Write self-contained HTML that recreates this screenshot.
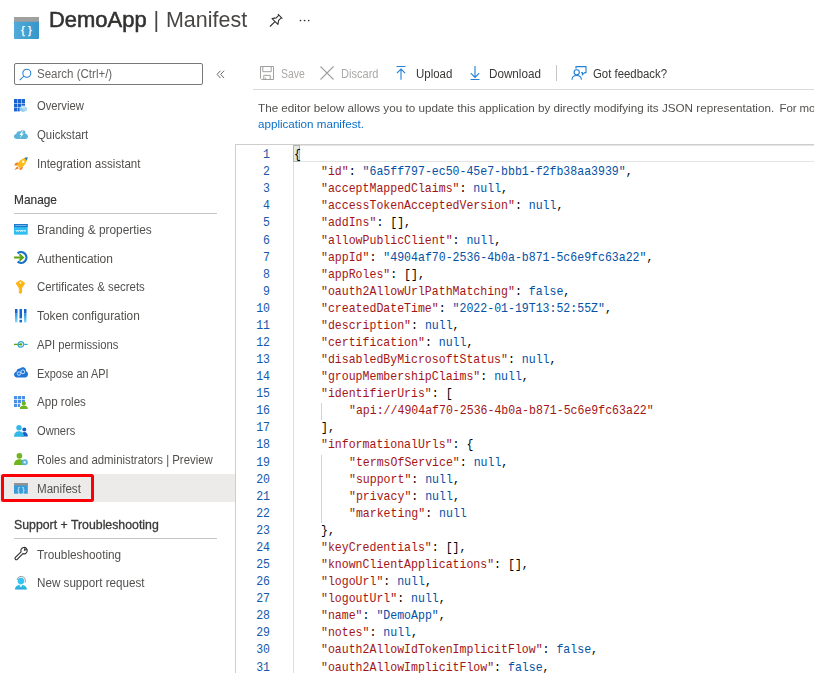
<!DOCTYPE html>
<html><head><meta charset="utf-8">
<style>
*{box-sizing:border-box;margin:0;padding:0}
html,body{width:814px;height:673px;overflow:hidden;background:#fff}
body{font-family:"Liberation Sans",sans-serif;color:#323130;position:relative}
.abs{position:absolute;white-space:nowrap}
.hr{height:1px;background:#c8c6c4}
.code{font-family:"Liberation Mono",monospace;font-size:11.9px;line-height:17.08px;white-space:pre}
.k{color:#a31515}.s{color:#0451a5}.p{color:#000}
.code{transform:scaleX(0.9704);transform-origin:0 0}
.ln{color:#1558ac;text-align:right;width:30px;transform-origin:100% 0}
svg{display:block;overflow:visible}
</style></head><body>
<svg class="abs" style="left:14px;top:17px" width="25" height="22" viewBox="0 0 25 22">
<defs><linearGradient id="tg" x1="0" y1="0" x2="1" y2="0"><stop offset="0" stop-color="#52abd9"/><stop offset="1" stop-color="#3496cb"/></linearGradient></defs>
<rect x="0" y="0" width="25" height="22" rx="1" fill="url(#tg)"/>
<rect x="0" y="0" width="25" height="4.7" rx="1" fill="#a0a0a0"/>
<text x="12.4" y="16.7" font-family="Liberation Sans" font-size="11.3" fill="#fff" stroke="#fff" stroke-width="0.25" text-anchor="middle">{ }</text>
</svg>
<svg class="abs" style="left:0px;top:0px" width="320" height="40" viewBox="0 0 320 40"><g transform="translate(275.3,21.2) rotate(45) scale(1.15)" fill="none" stroke="#323130" stroke-width="0.95" stroke-linejoin="round" stroke-linecap="round"><path d="M-2.4 -6 H2.4 M-1.5 -6 L-1.5 -2.6 L-3.6 0.4 H3.6 L1.5 -2.6 L1.5 -6 M0 0.4 V6.2"/></g>
<circle cx="300.5" cy="20.5" r="0.85" fill="#323130"/><circle cx="304.6" cy="20.5" r="0.85" fill="#323130"/><circle cx="308.7" cy="20.5" r="0.85" fill="#323130"/></svg>
<div class="abs" style="left:14px;top:63px;width:189px;height:22px;border:1px solid #7a7876;border-radius:2px"><svg class="abs" style="left:4px;top:4px" width="13" height="13" viewBox="0 0 13 13"><circle cx="7.8" cy="5.2" r="4" fill="none" stroke="#2580d4" stroke-width="1.05"/><path d="M5 8 L0.8 12.2" stroke="#2580d4" stroke-width="1.05"/></svg></div>
<svg class="abs" style="left:216px;top:69px" width="10" height="11" viewBox="0 0 10 11"><path d="M4.5 1.7 L1.1 5.4 L4.5 9.1 M8.1 1.7 L4.7 5.4 L8.1 9.1" fill="none" stroke="#605e5c" stroke-width="0.95"/></svg>
<div class="abs" style="left:0;top:474px;width:235px;height:28px;background:#edebe9"></div>
<div class="abs" style="left:1px;top:474px;width:92.8px;height:27.8px;border:3px solid #fb0007;border-radius:2.5px"></div>
<svg class="abs" style="left:14.0px;top:99.2px" width="12.6" height="13.0" viewBox="0 0 12.6 13.0"><g fill="#1a62cf"><rect x="0" y="0" width="3.4" height="4"/><rect x="3.8" y="0" width="3.4" height="4"/><rect x="7.6" y="0" width="3.4" height="4"/>
<rect x="0" y="4.5" width="3.4" height="4"/><rect x="3.8" y="4.5" width="3.4" height="4"/><rect x="7.6" y="4.5" width="3.4" height="2.2"/>
<rect x="0" y="9" width="3.4" height="3.4"/><rect x="3.8" y="9" width="2" height="3.4"/></g>
<path d="M5.6 8.3 L9.1 6.8 L12.6 8.3 L12.6 11.6 L9.1 13 L5.6 11.6 Z" fill="#8cc8ee"/><path d="M5.6 8.3 L9.1 9.7 L12.6 8.3 L9.1 6.8Z" fill="#c9e6f8"/><path d="M9.1 9.7 V13 L12.6 11.6 V8.3Z" fill="#a9d7f3"/></svg>
<svg class="abs" style="left:13.8px;top:130.0px" width="14.0" height="9.0" viewBox="0 0 14.0 9.0"><path d="M3 9 C1 9 0 7.8 0 6.5 C0 5.1 1 4.1 2.3 4 C2.4 1.8 4.4 0.6 6.2 1.4 C7 0.2 8.8 -0.3 10.2 0.6 C11.3 1.3 11.7 2.6 11.4 3.7 C12.9 3.9 14 5 14 6.5 C14 8 12.8 9 11.3 9 Z" fill="#59b4d9"/>
<path d="M9 0 L5.4 4.9 L7.3 4.9 L5.6 8.6 L9.8 3.6 L7.8 3.6 L9.6 0 Z" fill="#fff"/></svg>
<svg class="abs" style="left:14.0px;top:157.0px" width="13.8" height="13.0" viewBox="0 0 13.8 13.0"><path d="M13.6 0.2 C10 0.4 6.8 2.2 4.6 5.2 L3 8.6 L5.8 11 L9 9.4 C11.8 7 13.4 3.8 13.6 0.2Z" fill="#fbbc18"/>
<path d="M13.6 0.2 C12.4 0.3 11.3 0.6 10.3 1.1 L12.7 3.5 C13.2 2.5 13.5 1.4 13.6 0.2Z" fill="#2f7fb8"/>
<path d="M4.6 5.2 L1.5 6 L0.2 8.6 L3 8.6Z" fill="#f47a20"/><path d="M9 9.4 L8 12.4 L5.4 13 L5.8 11Z" fill="#f47a20"/>
<path d="M3 9.4 L0.4 13 L5 11.2Z" fill="#f47a20"/><circle cx="9.2" cy="4.8" r="1.2" fill="#fff"/></svg>
<svg class="abs" style="left:14.2px;top:223.5px" width="13.7" height="10.7" viewBox="0 0 13.7 10.7"><rect x="0" y="0" width="13.7" height="10.7" fill="#30bdf0"/><rect x="0" y="0" width="13.7" height="3.1" fill="#1b77c9"/><rect x="1.2" y="1.1" width="11.3" height="0.8" fill="#8cc6ee"/>
<path d="M1.8 6.1 L2.7 7.5 L3.6 6.1 L4.5 7.5 L5.4 6.1 M5.9 6.1 L6.8 7.5 L7.7 6.1 L8.6 7.5 L9.5 6.1 M10 6.1 L10.9 7.5 L11.8 6.1" fill="none" stroke="#fff" stroke-width="0.9"/></svg>
<svg class="abs" style="left:14.2px;top:251.2px" width="13.4" height="13.0" viewBox="0 0 13.4 13.0"><path d="M3.6 2.3 A5.4 5.4 0 1 1 3.6 10.7" fill="none" stroke="#1a73c8" stroke-width="2.3"/>
<path d="M0 6.5 H8.8 M5.4 3.3 L9 6.5 L5.4 9.7" fill="none" stroke="#5ea414" stroke-width="1.9"/></svg>
<svg class="abs" style="left:16.2px;top:279.8px" width="8.9" height="14.0" viewBox="0 0 8.9 14.0"><path d="M4.45 0 L8.3 2.2 C9 2.7 9 3.6 8.7 4.2 L6.1 8 L6.1 12.4 L4.45 14 L2.8 12.4 L2.8 11.2 L3.6 10.4 L2.8 9.6 L2.8 8 L0.2 4.2 C-0.1 3.6 -0.1 2.7 0.6 2.2 Z" fill="#fdb515"/>
<circle cx="4.45" cy="2.7" r="1" fill="#fff0c0"/></svg>
<svg class="abs" style="left:15.3px;top:308.6px" width="11.5" height="13.4" viewBox="0 0 11.5 13.4"><defs><linearGradient id="tk" x1="0" y1="0" x2="0" y2="1"><stop offset="0" stop-color="#2a93e4"/><stop offset="1" stop-color="#86e0f7"/></linearGradient></defs>
<rect x="0" y="0" width="2.5" height="4.6" fill="#1566cc"/><rect x="0" y="4.6" width="2.5" height="8.8" fill="url(#tk)"/>
<rect x="4.5" y="0" width="2.5" height="9.4" fill="#1566cc"/><rect x="4.5" y="10.8" width="2.5" height="2.6" fill="#1566cc"/>
<rect x="9" y="0" width="2.5" height="4.6" fill="#1566cc"/><rect x="9" y="4.6" width="2.5" height="8.8" fill="url(#tk)"/></svg>
<svg class="abs" style="left:14.2px;top:341.0px" width="13.7" height="6.8" viewBox="0 0 13.7 6.8"><path d="M0 3.4 H8" stroke="#5ea414" stroke-width="1.3"/><path d="M10.2 3.4 H13.7" stroke="#34a8d0" stroke-width="1.2"/>
<circle cx="6.9" cy="3.4" r="2.8" fill="none" stroke="#34a8d0" stroke-width="1.3"/><circle cx="6.9" cy="3.4" r="1.2" fill="#5ea414"/></svg>
<svg class="abs" style="left:14.2px;top:367.0px" width="14.0" height="10.4" viewBox="0 0 14.0 10.4"><path d="M3.2 10.4 C1.2 10.4 0 9 0 7.5 C0 6 1 4.9 2.4 4.7 C2.6 2.6 4.2 1.4 6 1.6 C7 0.3 9 -0.3 10.6 0.7 C11.8 1.5 12.2 2.8 12 4 C13.2 4.4 14 5.6 14 7.2 C14 9 12.8 10.4 11 10.4 Z" fill="#1f75d8"/>
<circle cx="5" cy="6.6" r="1.7" fill="none" stroke="#cfe4f8" stroke-width="1"/><circle cx="8.8" cy="4.8" r="1.9" fill="none" stroke="#cfe4f8" stroke-width="1"/></svg>
<svg class="abs" style="left:14.2px;top:395.7px" width="13.8" height="13.0" viewBox="0 0 13.8 13.0"><g fill="#4a8fe8"><rect x="0" y="0" width="3.2" height="3.2"/><rect x="3.9" y="0" width="3.2" height="3.2"/><rect x="7.8" y="0" width="3.2" height="3.2"/>
<rect x="0" y="3.9" width="3.2" height="3.2"/><rect x="3.9" y="3.9" width="3.2" height="3.2"/><rect x="7.8" y="3.9" width="3.2" height="2"/>
<rect x="0" y="7.8" width="3.2" height="3.2"/><rect x="3.9" y="7.8" width="2.2" height="3.2"/></g>
<circle cx="9.8" cy="7.4" r="2.1" fill="#6fb51f"/><path d="M5.8 13 C5.8 10.6 7.6 9.6 9.8 9.6 C12 9.6 13.8 10.6 13.8 13Z" fill="#6fb51f"/></svg>
<svg class="abs" style="left:14.2px;top:425.2px" width="13.8" height="11.8" viewBox="0 0 13.8 11.8"><circle cx="10.3" cy="4.4" r="2" fill="#1a5fc4"/><path d="M7.2 11.4 C7.2 8.6 8.4 7 10.4 7 C12.4 7 13.8 8.6 13.8 11.4Z" fill="#1a5fc4"/>
<circle cx="5" cy="2.8" r="2.7" fill="#32b8e8"/><path d="M0 11.8 C0 8.2 2.2 6.2 5 6.2 C7.8 6.2 10 8.2 10 11.8Z" fill="#32b8e8"/></svg>
<svg class="abs" style="left:14.2px;top:453.3px" width="13.8" height="12.3" viewBox="0 0 13.8 12.3"><circle cx="5.4" cy="2.9" r="2.8" fill="#6fb51f"/><path d="M0 12 C0 8.4 2.2 6.3 5.4 6.3 C8.6 6.3 10.8 8.4 10.8 12Z" fill="#6fb51f"/>
<circle cx="10.8" cy="9.3" r="3" fill="#59b4d9"/><circle cx="10.8" cy="9.3" r="1.2" fill="#d9eefa"/></svg>
<svg class="abs" style="left:14.2px;top:483.3px" width="13.8" height="10.7" viewBox="0 0 13.8 10.7"><rect x="0" y="0" width="13.8" height="10.7" fill="#3a9bd9"/><rect x="0" y="0" width="13.8" height="2.4" fill="#929292"/>
<text x="6.9" y="9.2" font-family="Liberation Sans" font-size="7.5" fill="#e6f2fa" text-anchor="middle">{ }</text></svg>
<svg class="abs" style="left:14.2px;top:547.4px" width="13.8" height="13.6" viewBox="0 0 13.8 13.6"><g transform="translate(1.9,11.8) rotate(-45)" fill="none" stroke="#323130" stroke-width="1.15" stroke-linejoin="round"><path d="M8.6 -1.3 L0.6 -1.3 A1.3 1.3 0 0 0 0.6 1.3 L8.6 1.3 A3.2 3.2 0 1 0 8.6 -1.3 Z"/><path d="M14.4 -1.3 L12 0 L14.4 1.3" stroke-width="1"/></g></svg>
<svg class="abs" style="left:15.3px;top:576.3px" width="11.8" height="13.6" viewBox="0 0 11.8 13.6"><defs><linearGradient id="sp" x1="0" y1="0" x2="0" y2="1"><stop offset="0" stop-color="#3ccbf4"/><stop offset="1" stop-color="#1fa4d6"/></linearGradient></defs>
<path d="M0 13.6 C0 10.3 2.3 8.7 5.9 8.7 C9.5 8.7 11.8 10.3 11.8 13.6Z" fill="url(#sp)"/><circle cx="5.9" cy="5" r="3.2" fill="#32c4f2"/>
<path d="M2.2 4 A4 4 0 0 1 10.2 5.2 V6.6" fill="none" stroke="#6a6a6a" stroke-width="0.7"/>
<path d="M4.6 9 L5.9 11.6 L7.2 9Z" fill="#fff"/></svg>
<div class="abs hr" style="left:14px;top:213px;width:203px"></div>
<div class="abs hr" style="left:14px;top:538px;width:203px"></div>
<div class="abs" style="left:235px;top:144px;width:1px;height:529px;background:#d0cecc"></div>
<div class="abs" style="left:235px;top:144px;width:579px;height:1px;background:#d0cecc"></div>
<svg class="abs" style="left:260px;top:66px" width="14" height="14" viewBox="0 0 14 14"><path d="M0.5 0.5 H13.5 V13.5 H1.7 L0.5 12.3 Z M2.8 0.5 V5.7 H11.2 V0.5 M3.8 13.5 V9.3 H10.2 V13.5 M5.6 13.5 V11.7" fill="none" stroke="#a19f9d" stroke-width="1"/></svg>
<svg class="abs" style="left:320px;top:66px" width="14" height="14" viewBox="0 0 14 14"><path d="M0.5 0.5 L13.5 13.5 M13.5 0.5 L0.5 13.5" fill="none" stroke="#a19f9d" stroke-width="1.1"/></svg>
<svg class="abs" style="left:396px;top:66px" width="10" height="15" viewBox="0 0 10 15"><path d="M0.5 0.5 H9.5 M5 13.7 V3.2 M0.9 7.1 L5 3 L9.1 7.1" fill="none" stroke="#2580d4" stroke-width="1.1"/></svg>
<svg class="abs" style="left:469.5px;top:66px" width="10" height="15" viewBox="0 0 10 15"><path d="M0.5 13.5 H9.5 M5 0 V11.2 M0.8 7.2 L5 11.4 L9.2 7.2" fill="none" stroke="#2580d4" stroke-width="1.1"/></svg>
<div class="abs" style="left:556px;top:65px;width:1px;height:16px;background:#c8c6c4"></div>
<svg class="abs" style="left:570.5px;top:66px" width="16" height="14" viewBox="0 0 16 14"><path d="M5 2.8 V0.6 H15 V6.6 H13.8 L11.4 8.8 V6.6 H10.2" fill="none" stroke="#2580d4" stroke-width="1.1"/><circle cx="5.7" cy="6.3" r="2.6" fill="none" stroke="#2580d4" stroke-width="1.1"/><path d="M1 13.8 C1 11 3.2 9.5 5.7 9.5 C8.2 9.5 10.4 11 10.4 13.8" fill="none" stroke="#2580d4" stroke-width="1.1"/></svg>
<div class="abs hr" style="left:253px;top:89px;width:561px;background:#dcdad8"></div>
<div class="abs" style="left:293px;top:145px;width:530px;height:17px;border:1px solid #e4e4e4"></div>
<div class="abs" style="left:293px;top:162px;width:1px;height:511px;background:#dedede"></div>
<div class="abs" style="left:293px;top:145px;width:7px;height:17px;border:1px solid #b4b4b4;background:#e4e9e4"></div>
<div class="abs" style="left:321px;top:403.3px;width:1px;height:17px;background:#d3d3d3"></div>
<div class="abs" style="left:321px;top:454.5px;width:1px;height:68.3px;background:#d3d3d3"></div>
<div class="abs code ln" style="left:240.4px;top:147.10px">1</div><div class="abs code" style="left:293.6px;top:147.10px"><span class="p">{</span></div>
<div class="abs code ln" style="left:240.4px;top:164.18px">2</div><div class="abs code" style="left:321.3px;top:164.18px"><span class="k">&quot;id&quot;</span><span class="p">: </span><span class="s">&quot;6a5ff797-ec50-45e7-bbb1-f2fb38aa3939&quot;</span><span class="p">,</span></div>
<div class="abs code ln" style="left:240.4px;top:181.26px">3</div><div class="abs code" style="left:321.3px;top:181.26px"><span class="k">&quot;acceptMappedClaims&quot;</span><span class="p">: </span><span class="s">null</span><span class="p">,</span></div>
<div class="abs code ln" style="left:240.4px;top:198.34px">4</div><div class="abs code" style="left:321.3px;top:198.34px"><span class="k">&quot;accessTokenAcceptedVersion&quot;</span><span class="p">: </span><span class="s">null</span><span class="p">,</span></div>
<div class="abs code ln" style="left:240.4px;top:215.42px">5</div><div class="abs code" style="left:321.3px;top:215.42px"><span class="k">&quot;addIns&quot;</span><span class="p">: [],</span></div>
<div class="abs code ln" style="left:240.4px;top:232.50px">6</div><div class="abs code" style="left:321.3px;top:232.50px"><span class="k">&quot;allowPublicClient&quot;</span><span class="p">: </span><span class="s">null</span><span class="p">,</span></div>
<div class="abs code ln" style="left:240.4px;top:249.58px">7</div><div class="abs code" style="left:321.3px;top:249.58px"><span class="k">&quot;appId&quot;</span><span class="p">: </span><span class="s">&quot;4904af70-2536-4b0a-b871-5c6e9fc63a22&quot;</span><span class="p">,</span></div>
<div class="abs code ln" style="left:240.4px;top:266.66px">8</div><div class="abs code" style="left:321.3px;top:266.66px"><span class="k">&quot;appRoles&quot;</span><span class="p">: [],</span></div>
<div class="abs code ln" style="left:240.4px;top:283.74px">9</div><div class="abs code" style="left:321.3px;top:283.74px"><span class="k">&quot;oauth2AllowUrlPathMatching&quot;</span><span class="p">: </span><span class="s">false</span><span class="p">,</span></div>
<div class="abs code ln" style="left:240.4px;top:300.82px">10</div><div class="abs code" style="left:321.3px;top:300.82px"><span class="k">&quot;createdDateTime&quot;</span><span class="p">: </span><span class="s">&quot;2022-01-19T13:52:55Z&quot;</span><span class="p">,</span></div>
<div class="abs code ln" style="left:240.4px;top:317.90px">11</div><div class="abs code" style="left:321.3px;top:317.90px"><span class="k">&quot;description&quot;</span><span class="p">: </span><span class="s">null</span><span class="p">,</span></div>
<div class="abs code ln" style="left:240.4px;top:334.98px">12</div><div class="abs code" style="left:321.3px;top:334.98px"><span class="k">&quot;certification&quot;</span><span class="p">: </span><span class="s">null</span><span class="p">,</span></div>
<div class="abs code ln" style="left:240.4px;top:352.06px">13</div><div class="abs code" style="left:321.3px;top:352.06px"><span class="k">&quot;disabledByMicrosoftStatus&quot;</span><span class="p">: </span><span class="s">null</span><span class="p">,</span></div>
<div class="abs code ln" style="left:240.4px;top:369.14px">14</div><div class="abs code" style="left:321.3px;top:369.14px"><span class="k">&quot;groupMembershipClaims&quot;</span><span class="p">: </span><span class="s">null</span><span class="p">,</span></div>
<div class="abs code ln" style="left:240.4px;top:386.22px">15</div><div class="abs code" style="left:321.3px;top:386.22px"><span class="k">&quot;identifierUris&quot;</span><span class="p">: [</span></div>
<div class="abs code ln" style="left:240.4px;top:403.30px">16</div><div class="abs code" style="left:349.0px;top:403.30px"><span class="k">&quot;api://4904af70-2536-4b0a-b871-5c6e9fc63a22&quot;</span></div>
<div class="abs code ln" style="left:240.4px;top:420.38px">17</div><div class="abs code" style="left:321.3px;top:420.38px"><span class="p">],</span></div>
<div class="abs code ln" style="left:240.4px;top:437.46px">18</div><div class="abs code" style="left:321.3px;top:437.46px"><span class="k">&quot;informationalUrls&quot;</span><span class="p">: {</span></div>
<div class="abs code ln" style="left:240.4px;top:454.54px">19</div><div class="abs code" style="left:349.0px;top:454.54px"><span class="k">&quot;termsOfService&quot;</span><span class="p">: </span><span class="s">null</span><span class="p">,</span></div>
<div class="abs code ln" style="left:240.4px;top:471.62px">20</div><div class="abs code" style="left:349.0px;top:471.62px"><span class="k">&quot;support&quot;</span><span class="p">: </span><span class="s">null</span><span class="p">,</span></div>
<div class="abs code ln" style="left:240.4px;top:488.70px">21</div><div class="abs code" style="left:349.0px;top:488.70px"><span class="k">&quot;privacy&quot;</span><span class="p">: </span><span class="s">null</span><span class="p">,</span></div>
<div class="abs code ln" style="left:240.4px;top:505.78px">22</div><div class="abs code" style="left:349.0px;top:505.78px"><span class="k">&quot;marketing&quot;</span><span class="p">: </span><span class="s">null</span></div>
<div class="abs code ln" style="left:240.4px;top:522.86px">23</div><div class="abs code" style="left:321.3px;top:522.86px"><span class="p">},</span></div>
<div class="abs code ln" style="left:240.4px;top:539.94px">24</div><div class="abs code" style="left:321.3px;top:539.94px"><span class="k">&quot;keyCredentials&quot;</span><span class="p">: [],</span></div>
<div class="abs code ln" style="left:240.4px;top:557.02px">25</div><div class="abs code" style="left:321.3px;top:557.02px"><span class="k">&quot;knownClientApplications&quot;</span><span class="p">: [],</span></div>
<div class="abs code ln" style="left:240.4px;top:574.10px">26</div><div class="abs code" style="left:321.3px;top:574.10px"><span class="k">&quot;logoUrl&quot;</span><span class="p">: </span><span class="s">null</span><span class="p">,</span></div>
<div class="abs code ln" style="left:240.4px;top:591.18px">27</div><div class="abs code" style="left:321.3px;top:591.18px"><span class="k">&quot;logoutUrl&quot;</span><span class="p">: </span><span class="s">null</span><span class="p">,</span></div>
<div class="abs code ln" style="left:240.4px;top:608.26px">28</div><div class="abs code" style="left:321.3px;top:608.26px"><span class="k">&quot;name&quot;</span><span class="p">: </span><span class="s">&quot;DemoApp&quot;</span><span class="p">,</span></div>
<div class="abs code ln" style="left:240.4px;top:625.34px">29</div><div class="abs code" style="left:321.3px;top:625.34px"><span class="k">&quot;notes&quot;</span><span class="p">: </span><span class="s">null</span><span class="p">,</span></div>
<div class="abs code ln" style="left:240.4px;top:642.42px">30</div><div class="abs code" style="left:321.3px;top:642.42px"><span class="k">&quot;oauth2AllowIdTokenImplicitFlow&quot;</span><span class="p">: </span><span class="s">false</span><span class="p">,</span></div>
<div class="abs code ln" style="left:240.4px;top:659.50px">31</div><div class="abs code" style="left:321.3px;top:659.50px"><span class="k">&quot;oauth2AllowImplicitFlow&quot;</span><span class="p">: </span><span class="s">false</span><span class="p">,</span></div>
<div class="abs" style="left:0;top:0;width:814px;height:673px;will-change:transform"><div class="abs" style="left:49.08px;top:11.52px;font-size:21.6px;line-height:16px;color:#323130;font-weight:400;transform:scaleX(1.0167);transform-origin:0 0;-webkit-text-stroke:0.55px #323130;">DemoApp</div>
<div class="abs" style="left:153.60px;top:11.52px;font-size:21.6px;line-height:16px;color:#484644;font-weight:400;">|</div>
<div class="abs" style="left:165.81px;top:11.52px;font-size:21.6px;line-height:16px;color:#484644;font-weight:400;transform:scaleX(0.9937);transform-origin:0 0;">Manifest</div>
<div class="abs" style="left:36.60px;top:65.74px;font-size:12px;line-height:16px;color:#666462;font-weight:400;transform:scaleX(0.9597);transform-origin:0 0;">Search (Ctrl+/)</div>
<div class="abs" style="left:36.90px;top:97.54px;font-size:12px;line-height:16px;color:#52504e;font-weight:400;transform:scaleX(0.9356);transform-origin:0 0;">Overview</div>
<div class="abs" style="left:36.90px;top:126.54px;font-size:12px;line-height:16px;color:#52504e;font-weight:400;transform:scaleX(0.9474);transform-origin:0 0;">Quickstart</div>
<div class="abs" style="left:36.64px;top:155.84px;font-size:12px;line-height:16px;color:#52504e;font-weight:400;transform:scaleX(0.9639);transform-origin:0 0;">Integration assistant</div>
<div class="abs" style="left:36.90px;top:222.24px;font-size:12px;line-height:16px;color:#52504e;font-weight:400;transform:scaleX(0.9882);transform-origin:0 0;">Branding &amp; properties</div>
<div class="abs" style="left:36.90px;top:250.94px;font-size:12px;line-height:16px;color:#52504e;font-weight:400;">Authentication</div>
<div class="abs" style="left:36.90px;top:279.24px;font-size:12px;line-height:16px;color:#52504e;font-weight:400;transform:scaleX(0.9509);transform-origin:0 0;">Certificates &amp; secrets</div>
<div class="abs" style="left:36.90px;top:307.94px;font-size:12px;line-height:16px;color:#52504e;font-weight:400;transform:scaleX(0.9875);transform-origin:0 0;">Token configuration</div>
<div class="abs" style="left:36.90px;top:336.64px;font-size:12px;line-height:16px;color:#52504e;font-weight:400;transform:scaleX(0.9378);transform-origin:0 0;">API permissions</div>
<div class="abs" style="left:36.90px;top:365.84px;font-size:12px;line-height:16px;color:#52504e;font-weight:400;transform:scaleX(0.9096);transform-origin:0 0;">Expose an API</div>
<div class="abs" style="left:36.90px;top:394.44px;font-size:12px;line-height:16px;color:#52504e;font-weight:400;transform:scaleX(0.9646);transform-origin:0 0;">App roles</div>
<div class="abs" style="left:36.90px;top:423.04px;font-size:12px;line-height:16px;color:#52504e;font-weight:400;transform:scaleX(0.9264);transform-origin:0 0;">Owners</div>
<div class="abs" style="left:36.90px;top:452.04px;font-size:12px;line-height:16px;color:#52504e;font-weight:400;transform:scaleX(0.9492);transform-origin:0 0;">Roles and administrators | Preview</div>
<div class="abs" style="left:36.90px;top:480.94px;font-size:12px;line-height:16px;color:#52504e;font-weight:400;transform:scaleX(0.9670);transform-origin:0 0;">Manifest</div>
<div class="abs" style="left:36.90px;top:546.74px;font-size:12px;line-height:16px;color:#52504e;font-weight:400;transform:scaleX(0.9831);transform-origin:0 0;">Troubleshooting</div>
<div class="abs" style="left:36.90px;top:574.74px;font-size:12px;line-height:16px;color:#52504e;font-weight:400;transform:scaleX(0.9714);transform-origin:0 0;">New support request</div>
<div class="abs" style="left:13.82px;top:192.37px;font-size:12.2px;line-height:16px;color:#323130;font-weight:400;transform:scaleX(0.9754);transform-origin:0 0;-webkit-text-stroke:0.15px #323130;">Manage</div>
<div class="abs" style="left:14.20px;top:516.97px;font-size:12.2px;line-height:16px;color:#3b3a39;font-weight:400;transform:scaleX(1.0102);transform-origin:0 0;-webkit-text-stroke:0.3px #3b3a39;">Support + Troubleshooting</div>
<div class="abs" style="left:280.90px;top:65.64px;font-size:12.3px;line-height:16px;color:#aaa8a6;font-weight:400;transform:scaleX(0.8478);transform-origin:0 0;">Save</div>
<div class="abs" style="left:341.10px;top:65.64px;font-size:12.3px;line-height:16px;color:#aaa8a6;font-weight:400;transform:scaleX(0.8986);transform-origin:0 0;">Discard</div>
<div class="abs" style="left:415.90px;top:65.64px;font-size:12.3px;line-height:16px;color:#3a3836;font-weight:400;transform:scaleX(0.9328);transform-origin:0 0;">Upload</div>
<div class="abs" style="left:488.85px;top:65.64px;font-size:12.3px;line-height:16px;color:#3a3836;font-weight:400;transform:scaleX(0.9490);transform-origin:0 0;">Download</div>
<div class="abs" style="left:592.90px;top:65.64px;font-size:12.3px;line-height:16px;color:#3a3836;font-weight:400;transform:scaleX(0.9258);transform-origin:0 0;">Got feedback?</div>
<div class="abs" style="left:257.80px;top:99.52px;font-size:11.5px;line-height:16px;color:#52504e;font-weight:400;transform:scaleX(1.0158);transform-origin:0 0;">The editor below allows you to update this application by directly modifying its JSON representation.</div>
<div class="abs" style="left:779.50px;top:99.52px;font-size:11.5px;line-height:16px;color:#52504e;font-weight:400;letter-spacing:-0.1px;">For more details, see: Understanding</div>
<div class="abs" style="left:257.80px;top:116.02px;font-size:11.5px;line-height:16px;color:#0a6fc8;font-weight:400;transform:scaleX(1.0101);transform-origin:0 0;">application manifest.</div>
</div></body></html>
